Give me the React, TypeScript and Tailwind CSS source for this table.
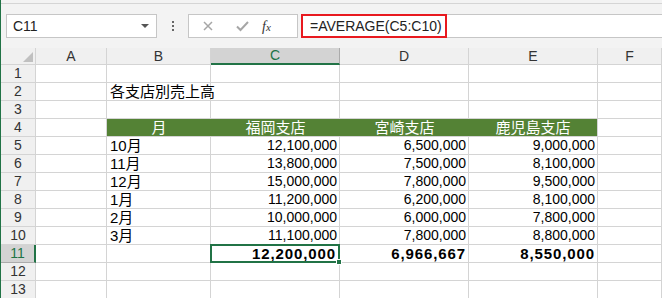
import { ReactNode } from "react";

const font = { fontFamily: '"Liberation Sans", "Noto Sans CJK JP", sans-serif' };

const cols = ["A", "B", "C", "D", "E", "F"];

type Row = { b?: string; c?: string; d?: string; e?: string };

const rows: Row[] = [
  {},
  { b: "各支店別売上高" },
  {},
  {},
  { b: "10月", c: "12,100,000", d: "6,500,000", e: "9,000,000" },
  { b: "11月", c: "13,800,000", d: "7,500,000", e: "8,100,000" },
  { b: "12月", c: "15,000,000", d: "7,800,000", e: "9,500,000" },
  { b: "1月", c: "11,200,000", d: "6,200,000", e: "8,100,000" },
  { b: "2月", c: "10,000,000", d: "6,000,000", e: "7,800,000" },
  { b: "3月", c: "11,100,000", d: "7,800,000", e: "8,800,000" },
  {},
  {},
  {},
];

function Cell({ children, className = "" }: { children?: ReactNode; className?: string }) {
  return (
    <div className={`h-[18px] border-r border-b border-[#d4d4d4] flex items-end overflow-visible whitespace-nowrap leading-[17px] ${className}`}>
      {children}
    </div>
  );
}

export default function App() {
  return (
    <div className="w-[662px] h-[298px] overflow-hidden bg-white border-l border-[#217346] text-[14px] text-black" style={font}>
      {/* formula bar */}
      <div className="h-[48px] bg-[#f3f3f3] pt-[3px]">
        <div className="border-t border-[#d5d5d5] h-[11px]" />
        <div className="flex h-[24px] items-stretch">
          <div className="ml-[5px] w-[151px] bg-white border border-[#c6c6c6] flex items-center justify-between pl-[6px] pr-[7px]">
            <span className="text-[14px] text-[#222]">C11</span>
            <span className="w-0 h-0 border-l-[4px] border-r-[4px] border-t-[4px] border-l-transparent border-r-transparent border-t-[#555]" />
          </div>
          <div className="w-[31px] flex flex-col items-center justify-center gap-[2px]">
            <span className="w-[2px] h-[2px] bg-[#666]" />
            <span className="w-[2px] h-[2px] bg-[#666]" />
            <span className="w-[2px] h-[2px] bg-[#666]" />
          </div>
          <div className="w-[110px] bg-white border border-[#c6c6c6] flex items-center">
            <svg width="34" height="22" viewBox="0 0 34 22" className="ml-[2px]">
              <path d="M13 7 L21 15 M21 7 L13 15" stroke="#a6a6a6" strokeWidth="1.5" fill="none" />
            </svg>
            <svg width="34" height="22" viewBox="0 0 34 22">
              <path d="M12 11.5 L15.5 15 L23 7" stroke="#a6a6a6" strokeWidth="2" fill="none" />
            </svg>
            <span className="ml-[3px] text-[14px] italic text-[#333]" style={{ fontFamily: '"Liberation Serif", serif' }}>
              f<span className="text-[11px]">x</span>
            </span>
          </div>
          <div className="ml-[3px] flex-1 bg-white border-y border-[#c6c6c6] flex">
            <div className="w-[146px] -my-px border-2 border-[#e8191f] flex items-center pl-[7px] text-[14px] text-[#222]">
              =AVERAGE(C5:C10)
            </div>
          </div>
        </div>
      </div>

      {/* sheet */}
      <div className="grid grid-cols-[35px_71px_104px_129px_129px_129px_1fr]">
        {/* column headers */}
        <div className="h-[17px] bg-[#f0f0f0] border-r border-b border-[#d4d4d4] flex items-end justify-end pr-[2px] pb-[2px]">
          <svg width="10" height="10" viewBox="0 0 10 10">
            <polygon points="10,0 10,10 0,10" fill="#c0c0c0" />
          </svg>
        </div>
        {cols.map((c) =>
          c === "C" ? (
            <div key={c} className="h-[17px] bg-[#d3d3d3] border-r border-[#ababab] border-b-2 border-b-[#217346] flex items-center justify-center text-[#217346] text-[14px]">
              {c}
            </div>
          ) : (
            <div key={c} className="h-[17px] bg-[#f0f0f0] border-r border-b border-[#d4d4d4] flex items-center justify-center text-[#333] text-[14px]">
              {c}
            </div>
          )
        )}

        {rows.map((r, i) => {
          const n = i + 1;
          const header = n === 4;
          const avg = n === 11;
          return [
            <div
              key={`h${n}`}
              className={`h-[18px] border-b flex items-center justify-center text-[14px] ${
                avg
                  ? "bg-[#d3d3d3] border-[#ababab] border-r-2 border-r-[#217346] text-[#217346]"
                  : "bg-[#f0f0f0] border-[#d4d4d4] border-r text-[#333]"
              }`}
            >
              {n}
            </div>,
            <Cell key={`a${n}`} />,
            header ? (
              <div key={`b${n}`} className="h-[18px] bg-[#548235] border-b border-[#d4d4d4] flex items-end justify-center leading-[17px] text-white text-[15px]">
                月
              </div>
            ) : (
              <Cell key={`b${n}`} className="pl-[3px] text-[15px]">
                {r.b}
              </Cell>
            ),
            header ? (
              <div key={`c${n}`} className="h-[18px] bg-[#548235] border-b border-[#d4d4d4] flex items-end justify-center leading-[17px] text-white text-[15px]">
                福岡支店
              </div>
            ) : avg ? (
              <div key={`c${n}`} className="h-[18px] border-r border-b border-[#d4d4d4] relative flex items-end justify-end pr-[3px] leading-[17px] font-bold text-[15px] tracking-[0.9px]">
                12,200,000
                <span className="absolute -left-px -top-px -right-px -bottom-px border-2 border-[#217346]" />
                <span className="absolute -right-[3px] -bottom-[3px] w-[6px] h-[6px] bg-[#217346] border border-white" />
              </div>
            ) : (
              <Cell key={`c${n}`} className="justify-end pr-[2px]">
                {r.c}
              </Cell>
            ),
            header ? (
              <div key={`d${n}`} className="h-[18px] bg-[#548235] border-b border-[#d4d4d4] flex items-end justify-center leading-[17px] text-white text-[15px]">
                宮崎支店
              </div>
            ) : (
              <Cell key={`d${n}`} className={`justify-end pr-[2px] ${avg ? "font-bold text-[15px] tracking-[0.9px]" : ""}`}>
                {avg ? "6,966,667" : r.d}
              </Cell>
            ),
            header ? (
              <div key={`e${n}`} className="h-[18px] bg-[#548235] border-r border-b border-[#d4d4d4] flex items-end justify-center leading-[17px] text-white text-[15px]">
                鹿児島支店
              </div>
            ) : (
              <Cell key={`e${n}`} className={`justify-end pr-[2px] ${avg ? "font-bold text-[15px] tracking-[0.9px]" : ""}`}>
                {avg ? "8,550,000" : r.e}
              </Cell>
            ),
            <Cell key={`f${n}`} />,
          ];
        })}
      </div>
    </div>
  );
}
